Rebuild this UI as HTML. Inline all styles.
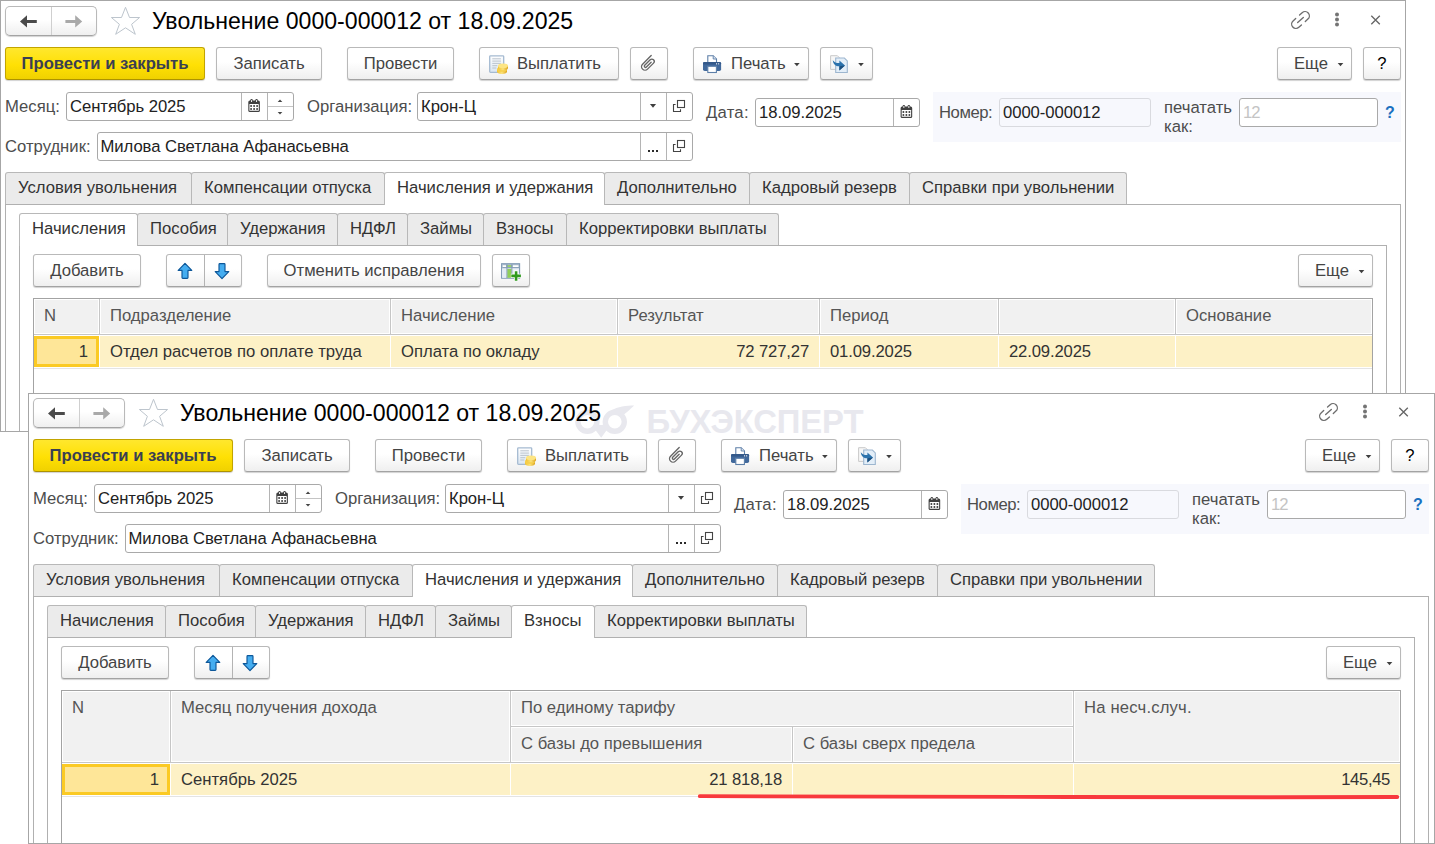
<!DOCTYPE html><html><head><meta charset="utf-8"><title>1C</title><style>
*{box-sizing:border-box;margin:0;padding:0}
html,body{width:1435px;height:844px;overflow:hidden;background:#fff}
body{font-family:"Liberation Sans",sans-serif;font-size:16.67px;color:#333;position:relative}
.win{position:absolute;background:#fff;border:1px solid #a6a6a6;overflow:hidden}
.abs{position:absolute}
.t{position:absolute;white-space:nowrap;line-height:20px}
.btn{position:absolute;height:33px;border:1px solid #b9b9b9;border-bottom-color:#a3a3a3;border-radius:3px;background:linear-gradient(#fff 0%,#fff 45%,#efefef 100%);box-shadow:0 1px 1px rgba(0,0,0,.18);color:#444;text-align:center;line-height:31px;white-space:nowrap}
.btn.y{background:linear-gradient(#ffe72e 0%,#ffe004 55%,#f0d100 100%);border-color:#c2a400;border-bottom-color:#ad9200;color:#3a3f52;font-weight:bold}
.fld{position:absolute;height:29px;border:1px solid #a9a9a9;border-radius:3px;background:#fff;color:#222;line-height:28px;white-space:nowrap;overflow:hidden}
.fld .v{position:absolute;left:3px;top:0;letter-spacing:-0.06px}
.fld .sep{position:absolute;top:0;bottom:0;width:1px;background:#b4b4b4}
.lbl{position:absolute;white-space:nowrap;color:#4d4d4d;line-height:20px}
.tab{position:absolute;height:32px;border:1px solid #b8b8b8;border-bottom:none;border-radius:3px 3px 0 0;background:#ebebeb;color:#333;line-height:29px;padding-left:12px;white-space:nowrap}
.tab.a{background:#fff;height:33px;z-index:2}
.panel{position:absolute;border:1px solid #b0b0b0;background:#fff}
.th{position:absolute;background:#f1f1f1;color:#555;line-height:20px;white-space:nowrap;overflow:hidden}
.td{position:absolute;background:#fdf1c6;color:#333;line-height:20px;white-space:nowrap;overflow:hidden}
svg{position:absolute;overflow:visible}
</style></head><body>
<div class="win" style="left:0;top:0;width:1406px;height:432px">
<div class="abs" style="left:-1px;top:-1px">
<div class="btn" style="left:5px;top:6px;width:92px;height:30px;border-radius:5px"></div>
<div class="abs" style="left:51px;top:7px;width:1px;height:28px;background:#cfcfcf"></div>
<svg style="left:0;top:0" width="1" height="1"><path d="M20 21.4 L27 15.2 L27 19.9 L36.8 19.9 L36.8 22.9 L27 22.9 L27 27.6 Z" fill="#4a4a4a"/></svg>
<svg style="left:0;top:0" width="1" height="1"><path d="M82.2 21.4 L75.2 15.2 L75.2 19.9 L65.4 19.9 L65.4 22.9 L75.2 22.9 L75.2 27.6 Z" fill="#a9a9a9"/></svg>
<svg style="left:0;top:0" width="1" height="1"><path d="M125.5 7.3 L129.5 17.5 L139.6 17.5 L131.6 24.3 L135.3 34.3 L125.5 27.8 L115.7 34.3 L119.4 24.3 L111.4 17.5 L121.5 17.5 Z" fill="#fff" stroke="#bdc5cd" stroke-width="1" stroke-linejoin="miter"/></svg>
<div class="t" style="left:152px;top:7px;font-size:23.1px;line-height:28px;color:#000">Увольнение 0000-000012 от 18.09.2025</div>
<svg style="left:0;top:0" width="1" height="1"><g transform="translate(1300.5,20) rotate(-42)" fill="none" stroke="#6e6e6e" stroke-width="1.35" stroke-linecap="round"><path d="M-2.6 -4.3 H-6.1 a4.3 4.3 0 0 0 0 8.6 H-2.6"/><path d="M2.6 -4.3 H6.1 a4.3 4.3 0 0 1 0 8.6 H2.6"/><path d="M-3.8 0 H3.8"/></g></svg>
<svg style="left:0;top:0" width="1" height="1"><g fill="#747474"><circle cx="1337" cy="14.6" r="2"/><circle cx="1337" cy="19.5" r="2"/><circle cx="1337" cy="24.4" r="2"/></g></svg>
<svg style="left:0;top:0" width="1" height="1"><path d="M1371.3 15.8 L1379.8 24.2 M1379.8 15.8 L1371.3 24.2" stroke="#666" stroke-width="1.3" fill="none"/></svg>
<div class="btn y" style="left:5px;top:47px;width:200px">Провести и закрыть</div>
<div class="btn" style="left:216px;top:47px;width:106px">Записать</div>
<div class="btn" style="left:347px;top:47px;width:107px">Провести</div>
<div class="btn" style="left:479px;top:47px;width:140px;text-align:left;padding-left:37px">Выплатить</div>
<svg style="left:0;top:0" width="1" height="1"><defs><linearGradient id="pd" x1="0" y1="0" x2="0" y2="1"><stop offset="0" stop-color="#ffffff"/><stop offset="1" stop-color="#d9e5f1"/></linearGradient><linearGradient id="cg" x1="0" y1="0" x2="1" y2="0"><stop offset="0" stop-color="#f3c233"/><stop offset=".5" stop-color="#fbe27a"/><stop offset="1" stop-color="#dca21c"/></linearGradient></defs><rect x="489.7" y="55.8" width="14" height="16.6" rx="0.8" fill="url(#pd)" stroke="#a5bad1" stroke-width="1.3"/><path d="M492.3 58.8h8.6M492.3 61.1h8.6M492.3 63.4h8.6M492.3 65.7h5M492.3 68h4" stroke="#b3bdc8" stroke-width="0.9"/><path d="M497 69.4 v2.2 a5 2.3 0 0 0 10 0 v-2.2 z" fill="url(#cg)"/><ellipse cx="502" cy="69.4" rx="5" ry="2.3" fill="#f6cf4a"/><path d="M498 65.8 v2.2 a5 2.3 0 0 0 10 0 v-2.2 z" fill="url(#cg)"/><ellipse cx="503" cy="65.8" rx="5" ry="2.3" fill="#fde584"/></svg>
<div class="btn" style="left:630px;top:47px;width:38px"></div>
<svg style="left:0;top:0" width="1" height="1"><g transform="translate(648.3,63.4) rotate(45)"><path d="M-3.5 -7.6 L-3.5 4.6 A3.5 3.5 0 0 0 3.5 4.6 L3.5 -3.9 A2.35 2.35 0 0 0 -1.2 -3.9 L-1.2 3.9 A1.2 1.2 0 0 0 1.2 3.9 L1.2 -2.8" fill="none" stroke="#666" stroke-width="1.35" stroke-linecap="round"/></g></svg>
<div class="btn" style="left:693px;top:47px;width:116px;text-align:left;padding-left:37px">Печать</div>
<svg style="left:0;top:0" width="1" height="1"><path d="M707.8 62.5 V55.7 H713.2 L716.5 59 V62.5" fill="#fff" stroke="#5d7fa8" stroke-width="1.1"/><path d="M713.2 55.7 V59 H716.5" fill="#dbe6f2" stroke="#5d7fa8" stroke-width="0.9"/><rect x="703" y="62" width="18.1" height="9" rx="1.8" fill="#41699c"/><rect x="703" y="62" width="18.1" height="2.6" rx="1.3" fill="#34598a"/><rect x="707.8" y="66.3" width="8.6" height="6.2" fill="#fff" stroke="#5d7fa8" stroke-width="1.1"/><rect x="716" y="63.3" width="1.1" height="1.1" fill="#fff"/><rect x="718.1" y="63.3" width="1.1" height="1.1" fill="#fff"/></svg>
<svg style="left:0;top:0" width="1" height="1"><path d="M794.1 63.1 L799.6999999999999 63.1 L796.9 66.2 Z" fill="#3f3f3f"/></svg>
<div class="btn" style="left:820px;top:47px;width:53px"></div>
<svg style="left:0;top:0" width="1" height="1"><path d="M830.6 55.7 H837.4 L839.4 57.7 V69.4 H830.6 Z" fill="#f7f7f7" stroke="#c9c9c9" stroke-width="1"/><path d="M835.7 58 H844.4 L847.3 60.9 V72.5 H835.7 Z" fill="#e3eef8" stroke="#9db6cf" stroke-width="1.1"/><path d="M832.8 60.2 C833.2 64.2 835.6 66.2 839.4 66.2 L839.4 70.6 L845 65.6 L839.4 60.4 L839.4 63.1 C836.4 63.2 834.4 62.4 832.8 60.2 Z" fill="#2c73ad"/><path d="M839.4 66.2 L839.4 70.6 L845 65.6 Z" fill="#1c4f7d"/></svg>
<svg style="left:0;top:0" width="1" height="1"><path d="M858.2 63.1 L863.8 63.1 L861 66.2 Z" fill="#3f3f3f"/></svg>
<div class="btn" style="left:1277px;top:47px;width:75px;text-align:left;padding-left:16px">Еще</div>
<svg style="left:0;top:0" width="1" height="1"><path d="M1337.7 63.1 L1343.3 63.1 L1340.5 66.2 Z" fill="#3f3f3f"/></svg>
<div class="btn" style="left:1363px;top:47px;width:38px;color:#000">?</div>
<div class="lbl" style="left:5px;top:97px">Месяц:</div>
<div class="fld" style="left:66px;top:92px;width:228px"><span class="v">Сентябрь 2025</span><span class="sep" style="left:174px"></span><span class="sep" style="left:200px"></span><span class="abs" style="left:201px;right:0;top:13px;height:1px;background:#c4c4c4"></span></div>
<svg style="left:0;top:0" width="1" height="1"><g transform="translate(248.1,99.1)"><rect x="0.2" y="1.3" width="11.6" height="11.5" rx="1.5" fill="#404040"/><rect x="1.3" y="4.9" width="9.4" height="6.8" rx="0.4" fill="#fff"/><rect x="2.2" y="0" width="2.5" height="3.4" rx="1.2" fill="#404040"/><rect x="7.2" y="0" width="2.5" height="3.4" rx="1.2" fill="#404040"/><rect x="2.95" y="0.8" width="1" height="2" rx="0.5" fill="#fff"/><rect x="7.95" y="0.8" width="1" height="2" rx="0.5" fill="#fff"/><g fill="#222"><rect x="2.2" y="6.1" width="1.6" height="1.6"/><rect x="5.2" y="6.1" width="1.6" height="1.6"/><rect x="8.2" y="6.1" width="1.6" height="1.6"/><rect x="2.2" y="9.1" width="1.6" height="1.6"/><rect x="5.2" y="9.1" width="1.6" height="1.6"/><rect x="8.2" y="9.1" width="1.6" height="1.6"/></g></g></svg>
<svg style="left:0;top:0" width="1" height="1"><path d="M277.7 102.0 L280 99.4 L282.3 102.0 Z" fill="#444"/></svg>
<svg style="left:0;top:0" width="1" height="1"><path d="M277.7 112 L282.3 112 L280 114.6 Z" fill="#444"/></svg>
<div class="lbl" style="left:307px;top:97px">Организация:</div>
<div class="fld" style="left:417px;top:92px;width:276px"><span class="v">Крон-Ц</span><span class="sep" style="left:222px"></span><span class="sep" style="left:248px"></span></div>
<svg style="left:0;top:0" width="1" height="1"><path d="M649.9 104.1 L656.1 104.1 L653 107.69999999999999 Z" fill="#3f3f3f"/></svg>
<svg style="left:0;top:0" width="1" height="1"><g transform="translate(673,100)"><path d="M2.6 4.5 H0.5 V11.5 H7.5 V9.3" fill="none" stroke="#444" stroke-width="1.1"/><rect x="4.5" y="0.5" width="7" height="7" fill="none" stroke="#444" stroke-width="1.1"/></g></svg>
<div class="lbl" style="left:706px;top:103px;letter-spacing:0.25px">Дата:</div>
<div class="fld" style="left:755px;top:98px;width:165px"><span class="v">18.09.2025</span><span class="sep" style="left:137px"></span></div>
<svg style="left:0;top:0" width="1" height="1"><g transform="translate(900.4,105.1)"><rect x="0.2" y="1.3" width="11.6" height="11.5" rx="1.5" fill="#404040"/><rect x="1.3" y="4.9" width="9.4" height="6.8" rx="0.4" fill="#fff"/><rect x="2.2" y="0" width="2.5" height="3.4" rx="1.2" fill="#404040"/><rect x="7.2" y="0" width="2.5" height="3.4" rx="1.2" fill="#404040"/><rect x="2.95" y="0.8" width="1" height="2" rx="0.5" fill="#fff"/><rect x="7.95" y="0.8" width="1" height="2" rx="0.5" fill="#fff"/><g fill="#222"><rect x="2.2" y="6.1" width="1.6" height="1.6"/><rect x="5.2" y="6.1" width="1.6" height="1.6"/><rect x="8.2" y="6.1" width="1.6" height="1.6"/><rect x="2.2" y="9.1" width="1.6" height="1.6"/><rect x="5.2" y="9.1" width="1.6" height="1.6"/><rect x="8.2" y="9.1" width="1.6" height="1.6"/></g></g></svg>
<div class="abs" style="left:933px;top:92px;width:468px;height:50px;background:#f7f8fd"></div>
<div class="lbl" style="left:939px;top:103px;letter-spacing:-0.45px">Номер:</div>
<div class="fld" style="left:999px;top:98px;width:152px;border-color:#d9dadf;background:#f7f8fd"><span class="v" style="left:3px">0000-000012</span></div>
<div class="lbl" style="left:1164px;top:98px;line-height:19px">печатать<br>как:</div>
<div class="fld" style="left:1239px;top:98px;width:139px"><span class="v" style="color:#c4c4c4;left:3px;letter-spacing:-0.9px">12</span></div>
<div class="t" style="left:1385px;top:103px;color:#1a70c0;font-weight:bold;font-size:16px">?</div>
<div class="lbl" style="left:5px;top:137px">Сотрудник:</div>
<div class="fld" style="left:97px;top:132px;width:596px"><span class="v" style="left:2.5px">Милова Светлана Афанасьевна</span><span class="sep" style="left:542px"></span><span class="sep" style="left:568px"></span></div>
<svg style="left:0;top:0" width="1" height="1"><g fill="#2a2a2a"><rect x="648" y="150" width="2" height="2"/><rect x="652" y="150" width="2" height="2"/><rect x="656" y="150" width="2" height="2"/></g></svg>
<svg style="left:0;top:0" width="1" height="1"><g transform="translate(673,140)"><path d="M2.6 4.5 H0.5 V11.5 H7.5 V9.3" fill="none" stroke="#444" stroke-width="1.1"/><rect x="4.5" y="0.5" width="7" height="7" fill="none" stroke="#444" stroke-width="1.1"/></g></svg>
<div class="panel" style="left:5px;top:204px;width:1396px;height:700px"></div>
<div class="tab" style="left:5px;top:172px;width:187px">Условия увольнения</div>
<div class="tab" style="left:191px;top:172px;width:194px">Компенсации отпуска</div>
<div class="tab a" style="left:384px;top:172px;width:221px">Начисления и удержания</div>
<div class="tab" style="left:604px;top:172px;width:146px">Дополнительно</div>
<div class="tab" style="left:749px;top:172px;width:161px">Кадровый резерв</div>
<div class="tab" style="left:909px;top:172px;width:218px">Справки при увольнении</div>
<div class="panel" style="left:19px;top:245px;width:1368px;height:700px"></div>
<div class="tab a" style="left:19px;top:213px;width:119px">Начисления</div>
<div class="tab" style="left:137px;top:213px;width:91px">Пособия</div>
<div class="tab" style="left:227px;top:213px;width:111px">Удержания</div>
<div class="tab" style="left:337px;top:213px;width:71px">НДФЛ</div>
<div class="tab" style="left:407px;top:213px;width:77px">Займы</div>
<div class="tab" style="left:483px;top:213px;width:84px">Взносы</div>
<div class="tab" style="left:566px;top:213px;width:213px">Корректировки выплаты</div>
<div class="btn" style="left:33px;top:254px;width:108px">Добавить</div>
<div class="btn" style="left:166px;top:254px;width:76px"></div>
<div class="abs" style="left:204px;top:255px;width:1px;height:31px;background:#b3b3b3"></div>
<svg style="left:0;top:0" width="1" height="1"><g transform="translate(185,263)"><path d="M0 0.3 L6.8 7.4 H3 V14.6 a0.8 0.8 0 0 1 -0.8 0.8 H-2.2 a0.8 0.8 0 0 1 -0.8 -0.8 V7.4 H-6.8 Z" fill="#45adf0" stroke="#0d5799" stroke-width="1.15" stroke-linejoin="round"/></g></svg>
<svg style="left:0;top:0" width="1" height="1"><g transform="translate(222,279)"><path d="M0 -0.3 L6.8 -7.4 H3 V-14.6 a0.8 0.8 0 0 0 -0.8 -0.8 H-2.2 a0.8 0.8 0 0 0 -0.8 0.8 V-7.4 H-6.8 Z" fill="#45adf0" stroke="#0d5799" stroke-width="1.15" stroke-linejoin="round"/></g></svg>
<div class="btn" style="left:1298px;top:254px;width:75px;text-align:left;padding-left:16px">Еще</div>
<svg style="left:0;top:0" width="1" height="1"><path d="M1358.7 270.1 L1364.3 270.1 L1361.5 273.20000000000005 Z" fill="#3f3f3f"/></svg>
<div class="btn" style="left:267px;top:254px;width:214px">Отменить исправления</div>
<div class="btn" style="left:492px;top:254px;width:38px"></div>
<svg style="left:0;top:0" width="1" height="1"><rect x="501.6" y="263.7" width="18" height="14.5" fill="#eef3f8" stroke="#7f99b4" stroke-width="1.1"/><rect x="502.2" y="264.3" width="16.8" height="4" fill="#8ba3bb"/><rect x="502.6" y="265.2" width="3.6" height="1.8" fill="#fff"/><rect x="507.4" y="265.2" width="4" height="1.8" fill="#9bd467"/><rect x="512.6" y="265.2" width="6" height="1.8" fill="#fff"/><rect x="502.2" y="268.8" width="4.4" height="9" fill="#e3ecf5"/><rect x="507.2" y="268.8" width="4.4" height="9" fill="#8fcf57"/><rect x="512.2" y="268.8" width="6.8" height="9" fill="#e9f0f7"/><path d="M506.9 264.3 V278 M511.9 264.3 V278" stroke="#7f99b4" stroke-width="0.9"/><path d="M516.1 270.6 V281.2 M510.9 275.9 H521.2" stroke="#fff" stroke-width="4.2"/><path d="M516.1 271.2 V280.8 M511.3 275.9 H520.9" stroke="#2f9a1e" stroke-width="2.6"/></svg>
<div class="panel" style="left:33px;top:298px;width:1340px;height:300px;border-color:#a3a3a3"></div>
<div class="th" style="left:35px;top:300px;width:63px;height:33px"><span class="abs" style="left:9px;top:6px">N</span></div>
<div class="th" style="left:101px;top:300px;width:288px;height:33px"><span class="abs" style="left:9px;top:6px">Подразделение</span></div>
<div class="abs" style="left:99px;top:299px;width:1px;height:35px;background:#c6c6c6"></div>
<div class="th" style="left:392px;top:300px;width:224px;height:33px"><span class="abs" style="left:9px;top:6px">Начисление</span></div>
<div class="abs" style="left:390px;top:299px;width:1px;height:35px;background:#c6c6c6"></div>
<div class="th" style="left:619px;top:300px;width:199px;height:33px"><span class="abs" style="left:9px;top:6px">Результат</span></div>
<div class="abs" style="left:617px;top:299px;width:1px;height:35px;background:#c6c6c6"></div>
<div class="th" style="left:821px;top:300px;width:176px;height:33px"><span class="abs" style="left:9px;top:6px">Период</span></div>
<div class="abs" style="left:819px;top:299px;width:1px;height:35px;background:#c6c6c6"></div>
<div class="th" style="left:1000px;top:300px;width:174px;height:33px"><span class="abs" style="left:9px;top:6px"></span></div>
<div class="abs" style="left:998px;top:299px;width:1px;height:35px;background:#c6c6c6"></div>
<div class="th" style="left:1177px;top:300px;width:194px;height:33px"><span class="abs" style="left:9px;top:6px">Основание</span></div>
<div class="abs" style="left:1175px;top:299px;width:1px;height:35px;background:#c6c6c6"></div>
<div class="abs" style="left:34px;top:334px;width:1338px;height:1px;background:#c6c6c6"></div>
<div class="td" style="left:34px;top:336px;width:65px;height:31px;background:#fee698;border:3px solid #fbca24"><span class="abs" style="right:8px;top:3px">1</span></div>
<div class="td" style="left:100px;top:336px;width:290px;height:31px"><span class="abs" style="left:10px;top:6px;">Отдел расчетов по оплате труда</span></div>
<div class="td" style="left:391px;top:336px;width:226px;height:31px"><span class="abs" style="left:10px;top:6px;">Оплата по окладу</span></div>
<div class="td" style="left:618px;top:336px;width:201px;height:31px"><span class="abs" style="right:10px;top:6px;letter-spacing:-0.15px;">72 727,27</span></div>
<div class="td" style="left:820px;top:336px;width:178px;height:31px"><span class="abs" style="left:10px;top:6px;letter-spacing:-0.15px;">01.09.2025</span></div>
<div class="td" style="left:999px;top:336px;width:176px;height:31px"><span class="abs" style="left:10px;top:6px;letter-spacing:-0.15px;">22.09.2025</span></div>
<div class="td" style="left:1176px;top:336px;width:196px;height:31px"><span class="abs" style="left:10px;top:6px;"></span></div>
<div class="abs" style="left:34px;top:368px;width:1338px;height:1px;background:#e4e4e4"></div>
</div></div>
<div class="win" style="left:28px;top:393px;width:1407px;height:451px">
<div class="abs" style="left:-1px;top:-2px">
<svg style="left:0;top:0" width="1" height="1"><g fill="none" stroke="#e8e8ee" stroke-width="5.4"><circle cx="559.4" cy="29.8" r="9.5"/><circle cx="586.8" cy="29.8" r="9.5"/></g><path d="M583 18.6 C 590 14.2, 598 13.6, 606.2 13.4 C 602 17.4, 598.6 20.6, 594.6 23.4 C 592 20.6, 588 18.6, 583 18.6 Z" fill="#e8e8ee"/><path d="M567.6 31.5 Q573 34.5 578.6 31.5 L578.8 38 L573.2 45.8 L567.4 38 Z" fill="#e8e8ee"/></svg>
<div class="t" style="left:618.6px;top:11.5px;font-size:32.8px;line-height:36px;font-weight:bold;color:#e8e8ee;letter-spacing:-0.1px">БУХЭКСПЕРТ</div>
<div class="btn" style="left:5px;top:6px;width:92px;height:30px;border-radius:5px"></div>
<div class="abs" style="left:51px;top:7px;width:1px;height:28px;background:#cfcfcf"></div>
<svg style="left:0;top:0" width="1" height="1"><path d="M20 21.4 L27 15.2 L27 19.9 L36.8 19.9 L36.8 22.9 L27 22.9 L27 27.6 Z" fill="#4a4a4a"/></svg>
<svg style="left:0;top:0" width="1" height="1"><path d="M82.2 21.4 L75.2 15.2 L75.2 19.9 L65.4 19.9 L65.4 22.9 L75.2 22.9 L75.2 27.6 Z" fill="#a9a9a9"/></svg>
<svg style="left:0;top:0" width="1" height="1"><path d="M125.5 7.3 L129.5 17.5 L139.6 17.5 L131.6 24.3 L135.3 34.3 L125.5 27.8 L115.7 34.3 L119.4 24.3 L111.4 17.5 L121.5 17.5 Z" fill="#fff" stroke="#bdc5cd" stroke-width="1" stroke-linejoin="miter"/></svg>
<div class="t" style="left:152px;top:7px;font-size:23.1px;line-height:28px;color:#000">Увольнение 0000-000012 от 18.09.2025</div>
<svg style="left:0;top:0" width="1" height="1"><g transform="translate(1300.5,20) rotate(-42)" fill="none" stroke="#6e6e6e" stroke-width="1.35" stroke-linecap="round"><path d="M-2.6 -4.3 H-6.1 a4.3 4.3 0 0 0 0 8.6 H-2.6"/><path d="M2.6 -4.3 H6.1 a4.3 4.3 0 0 1 0 8.6 H2.6"/><path d="M-3.8 0 H3.8"/></g></svg>
<svg style="left:0;top:0" width="1" height="1"><g fill="#747474"><circle cx="1337" cy="14.6" r="2"/><circle cx="1337" cy="19.5" r="2"/><circle cx="1337" cy="24.4" r="2"/></g></svg>
<svg style="left:0;top:0" width="1" height="1"><path d="M1371.3 15.8 L1379.8 24.2 M1379.8 15.8 L1371.3 24.2" stroke="#666" stroke-width="1.3" fill="none"/></svg>
<div class="btn y" style="left:5px;top:47px;width:200px">Провести и закрыть</div>
<div class="btn" style="left:216px;top:47px;width:106px">Записать</div>
<div class="btn" style="left:347px;top:47px;width:107px">Провести</div>
<div class="btn" style="left:479px;top:47px;width:140px;text-align:left;padding-left:37px">Выплатить</div>
<svg style="left:0;top:0" width="1" height="1"><defs><linearGradient id="pd" x1="0" y1="0" x2="0" y2="1"><stop offset="0" stop-color="#ffffff"/><stop offset="1" stop-color="#d9e5f1"/></linearGradient><linearGradient id="cg" x1="0" y1="0" x2="1" y2="0"><stop offset="0" stop-color="#f3c233"/><stop offset=".5" stop-color="#fbe27a"/><stop offset="1" stop-color="#dca21c"/></linearGradient></defs><rect x="489.7" y="55.8" width="14" height="16.6" rx="0.8" fill="url(#pd)" stroke="#a5bad1" stroke-width="1.3"/><path d="M492.3 58.8h8.6M492.3 61.1h8.6M492.3 63.4h8.6M492.3 65.7h5M492.3 68h4" stroke="#b3bdc8" stroke-width="0.9"/><path d="M497 69.4 v2.2 a5 2.3 0 0 0 10 0 v-2.2 z" fill="url(#cg)"/><ellipse cx="502" cy="69.4" rx="5" ry="2.3" fill="#f6cf4a"/><path d="M498 65.8 v2.2 a5 2.3 0 0 0 10 0 v-2.2 z" fill="url(#cg)"/><ellipse cx="503" cy="65.8" rx="5" ry="2.3" fill="#fde584"/></svg>
<div class="btn" style="left:630px;top:47px;width:38px"></div>
<svg style="left:0;top:0" width="1" height="1"><g transform="translate(648.3,63.4) rotate(45)"><path d="M-3.5 -7.6 L-3.5 4.6 A3.5 3.5 0 0 0 3.5 4.6 L3.5 -3.9 A2.35 2.35 0 0 0 -1.2 -3.9 L-1.2 3.9 A1.2 1.2 0 0 0 1.2 3.9 L1.2 -2.8" fill="none" stroke="#666" stroke-width="1.35" stroke-linecap="round"/></g></svg>
<div class="btn" style="left:693px;top:47px;width:116px;text-align:left;padding-left:37px">Печать</div>
<svg style="left:0;top:0" width="1" height="1"><path d="M707.8 62.5 V55.7 H713.2 L716.5 59 V62.5" fill="#fff" stroke="#5d7fa8" stroke-width="1.1"/><path d="M713.2 55.7 V59 H716.5" fill="#dbe6f2" stroke="#5d7fa8" stroke-width="0.9"/><rect x="703" y="62" width="18.1" height="9" rx="1.8" fill="#41699c"/><rect x="703" y="62" width="18.1" height="2.6" rx="1.3" fill="#34598a"/><rect x="707.8" y="66.3" width="8.6" height="6.2" fill="#fff" stroke="#5d7fa8" stroke-width="1.1"/><rect x="716" y="63.3" width="1.1" height="1.1" fill="#fff"/><rect x="718.1" y="63.3" width="1.1" height="1.1" fill="#fff"/></svg>
<svg style="left:0;top:0" width="1" height="1"><path d="M794.1 63.1 L799.6999999999999 63.1 L796.9 66.2 Z" fill="#3f3f3f"/></svg>
<div class="btn" style="left:820px;top:47px;width:53px"></div>
<svg style="left:0;top:0" width="1" height="1"><path d="M830.6 55.7 H837.4 L839.4 57.7 V69.4 H830.6 Z" fill="#f7f7f7" stroke="#c9c9c9" stroke-width="1"/><path d="M835.7 58 H844.4 L847.3 60.9 V72.5 H835.7 Z" fill="#e3eef8" stroke="#9db6cf" stroke-width="1.1"/><path d="M832.8 60.2 C833.2 64.2 835.6 66.2 839.4 66.2 L839.4 70.6 L845 65.6 L839.4 60.4 L839.4 63.1 C836.4 63.2 834.4 62.4 832.8 60.2 Z" fill="#2c73ad"/><path d="M839.4 66.2 L839.4 70.6 L845 65.6 Z" fill="#1c4f7d"/></svg>
<svg style="left:0;top:0" width="1" height="1"><path d="M858.2 63.1 L863.8 63.1 L861 66.2 Z" fill="#3f3f3f"/></svg>
<div class="btn" style="left:1277px;top:47px;width:75px;text-align:left;padding-left:16px">Еще</div>
<svg style="left:0;top:0" width="1" height="1"><path d="M1337.7 63.1 L1343.3 63.1 L1340.5 66.2 Z" fill="#3f3f3f"/></svg>
<div class="btn" style="left:1363px;top:47px;width:38px;color:#000">?</div>
<div class="lbl" style="left:5px;top:97px">Месяц:</div>
<div class="fld" style="left:66px;top:92px;width:228px"><span class="v">Сентябрь 2025</span><span class="sep" style="left:174px"></span><span class="sep" style="left:200px"></span><span class="abs" style="left:201px;right:0;top:13px;height:1px;background:#c4c4c4"></span></div>
<svg style="left:0;top:0" width="1" height="1"><g transform="translate(248.1,99.1)"><rect x="0.2" y="1.3" width="11.6" height="11.5" rx="1.5" fill="#404040"/><rect x="1.3" y="4.9" width="9.4" height="6.8" rx="0.4" fill="#fff"/><rect x="2.2" y="0" width="2.5" height="3.4" rx="1.2" fill="#404040"/><rect x="7.2" y="0" width="2.5" height="3.4" rx="1.2" fill="#404040"/><rect x="2.95" y="0.8" width="1" height="2" rx="0.5" fill="#fff"/><rect x="7.95" y="0.8" width="1" height="2" rx="0.5" fill="#fff"/><g fill="#222"><rect x="2.2" y="6.1" width="1.6" height="1.6"/><rect x="5.2" y="6.1" width="1.6" height="1.6"/><rect x="8.2" y="6.1" width="1.6" height="1.6"/><rect x="2.2" y="9.1" width="1.6" height="1.6"/><rect x="5.2" y="9.1" width="1.6" height="1.6"/><rect x="8.2" y="9.1" width="1.6" height="1.6"/></g></g></svg>
<svg style="left:0;top:0" width="1" height="1"><path d="M277.7 102.0 L280 99.4 L282.3 102.0 Z" fill="#444"/></svg>
<svg style="left:0;top:0" width="1" height="1"><path d="M277.7 112 L282.3 112 L280 114.6 Z" fill="#444"/></svg>
<div class="lbl" style="left:307px;top:97px">Организация:</div>
<div class="fld" style="left:417px;top:92px;width:276px"><span class="v">Крон-Ц</span><span class="sep" style="left:222px"></span><span class="sep" style="left:248px"></span></div>
<svg style="left:0;top:0" width="1" height="1"><path d="M649.9 104.1 L656.1 104.1 L653 107.69999999999999 Z" fill="#3f3f3f"/></svg>
<svg style="left:0;top:0" width="1" height="1"><g transform="translate(673,100)"><path d="M2.6 4.5 H0.5 V11.5 H7.5 V9.3" fill="none" stroke="#444" stroke-width="1.1"/><rect x="4.5" y="0.5" width="7" height="7" fill="none" stroke="#444" stroke-width="1.1"/></g></svg>
<div class="lbl" style="left:706px;top:103px;letter-spacing:0.25px">Дата:</div>
<div class="fld" style="left:755px;top:98px;width:165px"><span class="v">18.09.2025</span><span class="sep" style="left:137px"></span></div>
<svg style="left:0;top:0" width="1" height="1"><g transform="translate(900.4,105.1)"><rect x="0.2" y="1.3" width="11.6" height="11.5" rx="1.5" fill="#404040"/><rect x="1.3" y="4.9" width="9.4" height="6.8" rx="0.4" fill="#fff"/><rect x="2.2" y="0" width="2.5" height="3.4" rx="1.2" fill="#404040"/><rect x="7.2" y="0" width="2.5" height="3.4" rx="1.2" fill="#404040"/><rect x="2.95" y="0.8" width="1" height="2" rx="0.5" fill="#fff"/><rect x="7.95" y="0.8" width="1" height="2" rx="0.5" fill="#fff"/><g fill="#222"><rect x="2.2" y="6.1" width="1.6" height="1.6"/><rect x="5.2" y="6.1" width="1.6" height="1.6"/><rect x="8.2" y="6.1" width="1.6" height="1.6"/><rect x="2.2" y="9.1" width="1.6" height="1.6"/><rect x="5.2" y="9.1" width="1.6" height="1.6"/><rect x="8.2" y="9.1" width="1.6" height="1.6"/></g></g></svg>
<div class="abs" style="left:933px;top:92px;width:468px;height:50px;background:#f7f8fd"></div>
<div class="lbl" style="left:939px;top:103px;letter-spacing:-0.45px">Номер:</div>
<div class="fld" style="left:999px;top:98px;width:152px;border-color:#d9dadf;background:#f7f8fd"><span class="v" style="left:3px">0000-000012</span></div>
<div class="lbl" style="left:1164px;top:98px;line-height:19px">печатать<br>как:</div>
<div class="fld" style="left:1239px;top:98px;width:139px"><span class="v" style="color:#c4c4c4;left:3px;letter-spacing:-0.9px">12</span></div>
<div class="t" style="left:1385px;top:103px;color:#1a70c0;font-weight:bold;font-size:16px">?</div>
<div class="lbl" style="left:5px;top:137px">Сотрудник:</div>
<div class="fld" style="left:97px;top:132px;width:596px"><span class="v" style="left:2.5px">Милова Светлана Афанасьевна</span><span class="sep" style="left:542px"></span><span class="sep" style="left:568px"></span></div>
<svg style="left:0;top:0" width="1" height="1"><g fill="#2a2a2a"><rect x="648" y="150" width="2" height="2"/><rect x="652" y="150" width="2" height="2"/><rect x="656" y="150" width="2" height="2"/></g></svg>
<svg style="left:0;top:0" width="1" height="1"><g transform="translate(673,140)"><path d="M2.6 4.5 H0.5 V11.5 H7.5 V9.3" fill="none" stroke="#444" stroke-width="1.1"/><rect x="4.5" y="0.5" width="7" height="7" fill="none" stroke="#444" stroke-width="1.1"/></g></svg>
<div class="panel" style="left:5px;top:204px;width:1396px;height:700px"></div>
<div class="tab" style="left:5px;top:172px;width:187px">Условия увольнения</div>
<div class="tab" style="left:191px;top:172px;width:194px">Компенсации отпуска</div>
<div class="tab a" style="left:384px;top:172px;width:221px">Начисления и удержания</div>
<div class="tab" style="left:604px;top:172px;width:146px">Дополнительно</div>
<div class="tab" style="left:749px;top:172px;width:161px">Кадровый резерв</div>
<div class="tab" style="left:909px;top:172px;width:218px">Справки при увольнении</div>
<div class="panel" style="left:19px;top:245px;width:1368px;height:700px"></div>
<div class="tab" style="left:19px;top:213px;width:119px">Начисления</div>
<div class="tab" style="left:137px;top:213px;width:91px">Пособия</div>
<div class="tab" style="left:227px;top:213px;width:111px">Удержания</div>
<div class="tab" style="left:337px;top:213px;width:71px">НДФЛ</div>
<div class="tab" style="left:407px;top:213px;width:77px">Займы</div>
<div class="tab a" style="left:483px;top:213px;width:84px">Взносы</div>
<div class="tab" style="left:566px;top:213px;width:213px">Корректировки выплаты</div>
<div class="btn" style="left:33px;top:254px;width:108px">Добавить</div>
<div class="btn" style="left:166px;top:254px;width:76px"></div>
<div class="abs" style="left:204px;top:255px;width:1px;height:31px;background:#b3b3b3"></div>
<svg style="left:0;top:0" width="1" height="1"><g transform="translate(185,263)"><path d="M0 0.3 L6.8 7.4 H3 V14.6 a0.8 0.8 0 0 1 -0.8 0.8 H-2.2 a0.8 0.8 0 0 1 -0.8 -0.8 V7.4 H-6.8 Z" fill="#45adf0" stroke="#0d5799" stroke-width="1.15" stroke-linejoin="round"/></g></svg>
<svg style="left:0;top:0" width="1" height="1"><g transform="translate(222,279)"><path d="M0 -0.3 L6.8 -7.4 H3 V-14.6 a0.8 0.8 0 0 0 -0.8 -0.8 H-2.2 a0.8 0.8 0 0 0 -0.8 0.8 V-7.4 H-6.8 Z" fill="#45adf0" stroke="#0d5799" stroke-width="1.15" stroke-linejoin="round"/></g></svg>
<div class="btn" style="left:1298px;top:254px;width:75px;text-align:left;padding-left:16px">Еще</div>
<svg style="left:0;top:0" width="1" height="1"><path d="M1358.7 270.1 L1364.3 270.1 L1361.5 273.20000000000005 Z" fill="#3f3f3f"/></svg>
<div class="panel" style="left:33px;top:298px;width:1340px;height:300px;border-color:#a3a3a3"></div>
<div class="th" style="left:35px;top:300px;width:106px;height:69px"><span class="abs" style="left:9px;top:6px">N</span></div>
<div class="th" style="left:144px;top:300px;width:337px;height:69px"><span class="abs" style="left:9px;top:6px">Месяц получения дохода</span></div>
<div class="th" style="left:484px;top:300px;width:560px;height:33px"><span class="abs" style="left:9px;top:6px">По единому тарифу</span></div>
<div class="th" style="left:484px;top:336px;width:279px;height:33px"><span class="abs" style="left:9px;top:6px">С базы до превышения</span></div>
<div class="th" style="left:766px;top:336px;width:278px;height:33px"><span class="abs" style="left:9px;top:6px">С базы сверх предела</span></div>
<div class="th" style="left:1047px;top:300px;width:324px;height:69px"><span class="abs" style="left:9px;top:6px"><span style="letter-spacing:0.17px">На несч.случ.</span></span></div>
<div class="abs" style="left:142px;top:299px;width:1px;height:71px;background:#c6c6c6"></div>
<div class="abs" style="left:482px;top:299px;width:1px;height:71px;background:#c6c6c6"></div>
<div class="abs" style="left:764px;top:335px;width:1px;height:35px;background:#c6c6c6"></div>
<div class="abs" style="left:1045px;top:299px;width:1px;height:71px;background:#c6c6c6"></div>
<div class="abs" style="left:483px;top:334px;width:562px;height:1px;background:#c6c6c6"></div>
<div class="abs" style="left:34px;top:370px;width:1338px;height:1px;background:#c6c6c6"></div>
<div class="td" style="left:34px;top:372px;width:108px;height:31px;background:#fee698;border:3px solid #fbca24"><span class="abs" style="right:8px;top:3px">1</span></div>
<div class="td" style="left:143px;top:372px;width:339px;height:31px"><span class="abs" style="left:10px;top:6px;">Сентябрь 2025</span></div>
<div class="td" style="left:483px;top:372px;width:281px;height:31px"><span class="abs" style="right:10px;top:6px;letter-spacing:-0.15px;">21 818,18</span></div>
<div class="td" style="left:765px;top:372px;width:280px;height:31px"><span class="abs" style="left:10px;top:6px;"></span></div>
<div class="td" style="left:1046px;top:372px;width:326px;height:31px"><span class="abs" style="right:10px;top:6px;letter-spacing:-0.35px;">145,45</span></div>
<div class="abs" style="left:34px;top:404px;width:1338px;height:1px;background:#e4e4e4"></div>
<svg style="left:0;top:0" width="1" height="1"><path d="M671.8 404.2 C 780 403.7, 900 405, 1040 405 S 1250 405.6, 1369.3 405.0" fill="none" stroke="#f8393d" stroke-width="3.8" stroke-linecap="round"/></svg>
</div></div>
</body></html>
